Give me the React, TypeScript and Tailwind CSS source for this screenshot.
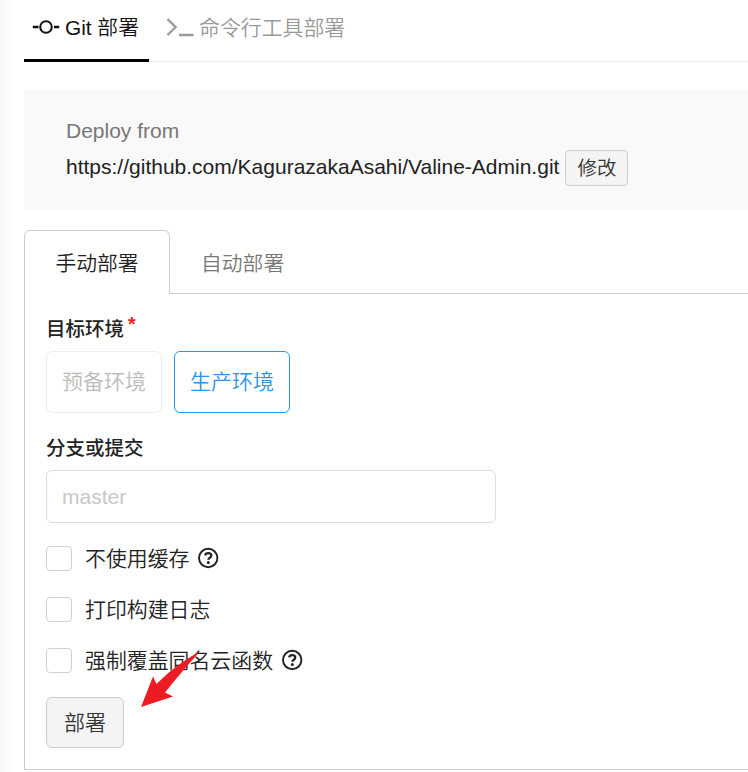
import type { ReactNode } from "react";

function CommitIcon() {
  return (
    <svg width="28" height="20" viewBox="0 0 28 20" fill="none" stroke="#111" strokeWidth="2.4" className="mb-[2px] shrink-0">
      <path d="M.8 10h5.7M22 10h5.3" />
      <circle cx="14" cy="10" r="5.8" strokeWidth="2" />
    </svg>
  );
}

function PromptIcon() {
  return (
    <svg width="28" height="20" viewBox="0 0 28 20" fill="none" stroke="#9b9b9b" strokeWidth="2.3" className="shrink-0">
      <path d="M1.5 1.2L9.7 9.1L1.5 17M13 17h14.5" />
    </svg>
  );
}

function HelpIcon() {
  return (
    <svg width="22" height="22" viewBox="0 0 22 22" fill="none" stroke="#222" className="mb-px ml-2 shrink-0">
      <circle cx="11.2" cy="11" r="9.2" strokeWidth="1.9" />
      <path d="M8.1 8.4C8.5 6.9 9.7 6.2 11.2 6.2C13 6.2 14.3 7.2 14.3 8.7C14.3 10.7 11.3 10.8 11.3 12.8" strokeWidth="2.2" />
      <circle cx="11.3" cy="15.6" r="1.5" fill="#222" stroke="none" />
    </svg>
  );
}

function CheckRow({ label, help }: { label: string; help?: boolean }) {
  return (
    <label className="flex h-[51px] items-center text-[#222]">
      <span className="h-[25px] w-[26px] rounded border border-[#d2d2d2] bg-white" />
      <span className="ml-[13px] pt-px text-[20.9px]">{label}</span>
      {help && <HelpIcon />}
    </label>
  );
}

function FieldLabel({ children }: { children: ReactNode }) {
  return <div className="flex h-7 items-center text-[19.5px] font-medium text-[#222]">{children}</div>;
}

export default function App() {
  return (
    <div className="relative flex h-[772px] w-[748px] overflow-hidden bg-white font-['Liberation_Sans','Noto_Sans_CJK_SC',sans-serif] text-[21px] leading-7 font-[350]">
      <div className="w-6 shrink-0 bg-linear-to-r from-[#f9f9f9] to-white to-70%" />
      <main className="flex min-w-0 flex-1 flex-col">
        <nav className="flex h-[62px] shrink-0 text-[20.8px] shadow-[inset_0_-1px_0_#eeeeee]">
          <div className="flex w-[125px] border-b-3 border-black pt-[14px] pl-2 text-[#111]">
            <div className="flex h-7 items-center gap-[5px] whitespace-nowrap">
              <CommitIcon />
              <span>Git 部署</span>
            </div>
          </div>
          <div className="flex pt-[14px] pl-[17px] text-[#999]">
            <div className="flex h-7 items-center gap-[5px] whitespace-nowrap">
              <PromptIcon />
              <span className="text-[20.9px]">命令行工具部署</span>
            </div>
          </div>
        </nav>

        <section className="mt-[27px] h-[120px] shrink-0 bg-[#f9f9f9] pt-7 pl-[42px]">
          <div className="text-[#777]">Deploy from</div>
          <div className="mt-[5px] flex h-9 items-center text-[#222]">
            <span className="pb-[2px]">https://github.com/KagurazakaAsahi/Valine-Admin.git</span>
            <button className="ml-[6px] flex h-9 w-[63px] items-center justify-center rounded border border-[#ccc] bg-[#f4f4f4] pb-px text-[19.5px] text-[#333]">
              修改
            </button>
          </div>
        </section>

        <div className="mt-[21px] flex h-16 shrink-0 text-[20.8px]">
          <div className="flex w-[146px] items-center justify-center rounded-t-md border border-b-0 border-[#ccc] pt-[2px] text-[#222]">
            手动部署
          </div>
          <div className="flex flex-1 items-center border-b border-[#ccc] pt-1 pl-[31px] text-[#777]">自动部署</div>
        </div>

        <section className="flex h-[476px] shrink-0 flex-col items-start border-b border-l border-[#ccc] pt-[21px] pl-[21px]">
          <FieldLabel>
            目标环境<span className="mb-[10px] ml-1 font-bold text-[#f02020]">*</span>
          </FieldLabel>
          <div className="mt-2 flex gap-3">
            <button className="h-[62px] w-[116px] rounded-md border border-[#eee] text-[#bbb]">预备环境</button>
            <button className="h-[62px] w-[116px] rounded-md border border-[#2a95e8] text-[#2a95e8]">生产环境</button>
          </div>
          <div className="mt-[21px]">
            <FieldLabel>分支或提交</FieldLabel>
          </div>
          <input
            className="mt-2 h-[53px] w-[450px] rounded-md border border-[#ddd] px-[15px] placeholder:text-[#c8c8c8]"
            placeholder="master"
          />
          <div className="mt-[10px]">
            <CheckRow label="不使用缓存" help />
            <CheckRow label="打印构建日志" />
            <CheckRow label="强制覆盖同名云函数" help />
          </div>
          <button className="mt-[11px] h-[51px] w-[78px] rounded-md border border-[#ccc] bg-[#f4f4f4] text-[#333]">
            部署
          </button>
        </section>
      </main>
      <svg className="absolute top-[650px] left-[138px]" width="64" height="60" viewBox="0 0 64 60">
        <path d="M3 57L15 26.5L18.5 34Q38 14 62 1.5Q45 20 27 42.5L35 46.5Z" fill="#ed1c24" />
      </svg>
    </div>
  );
}
